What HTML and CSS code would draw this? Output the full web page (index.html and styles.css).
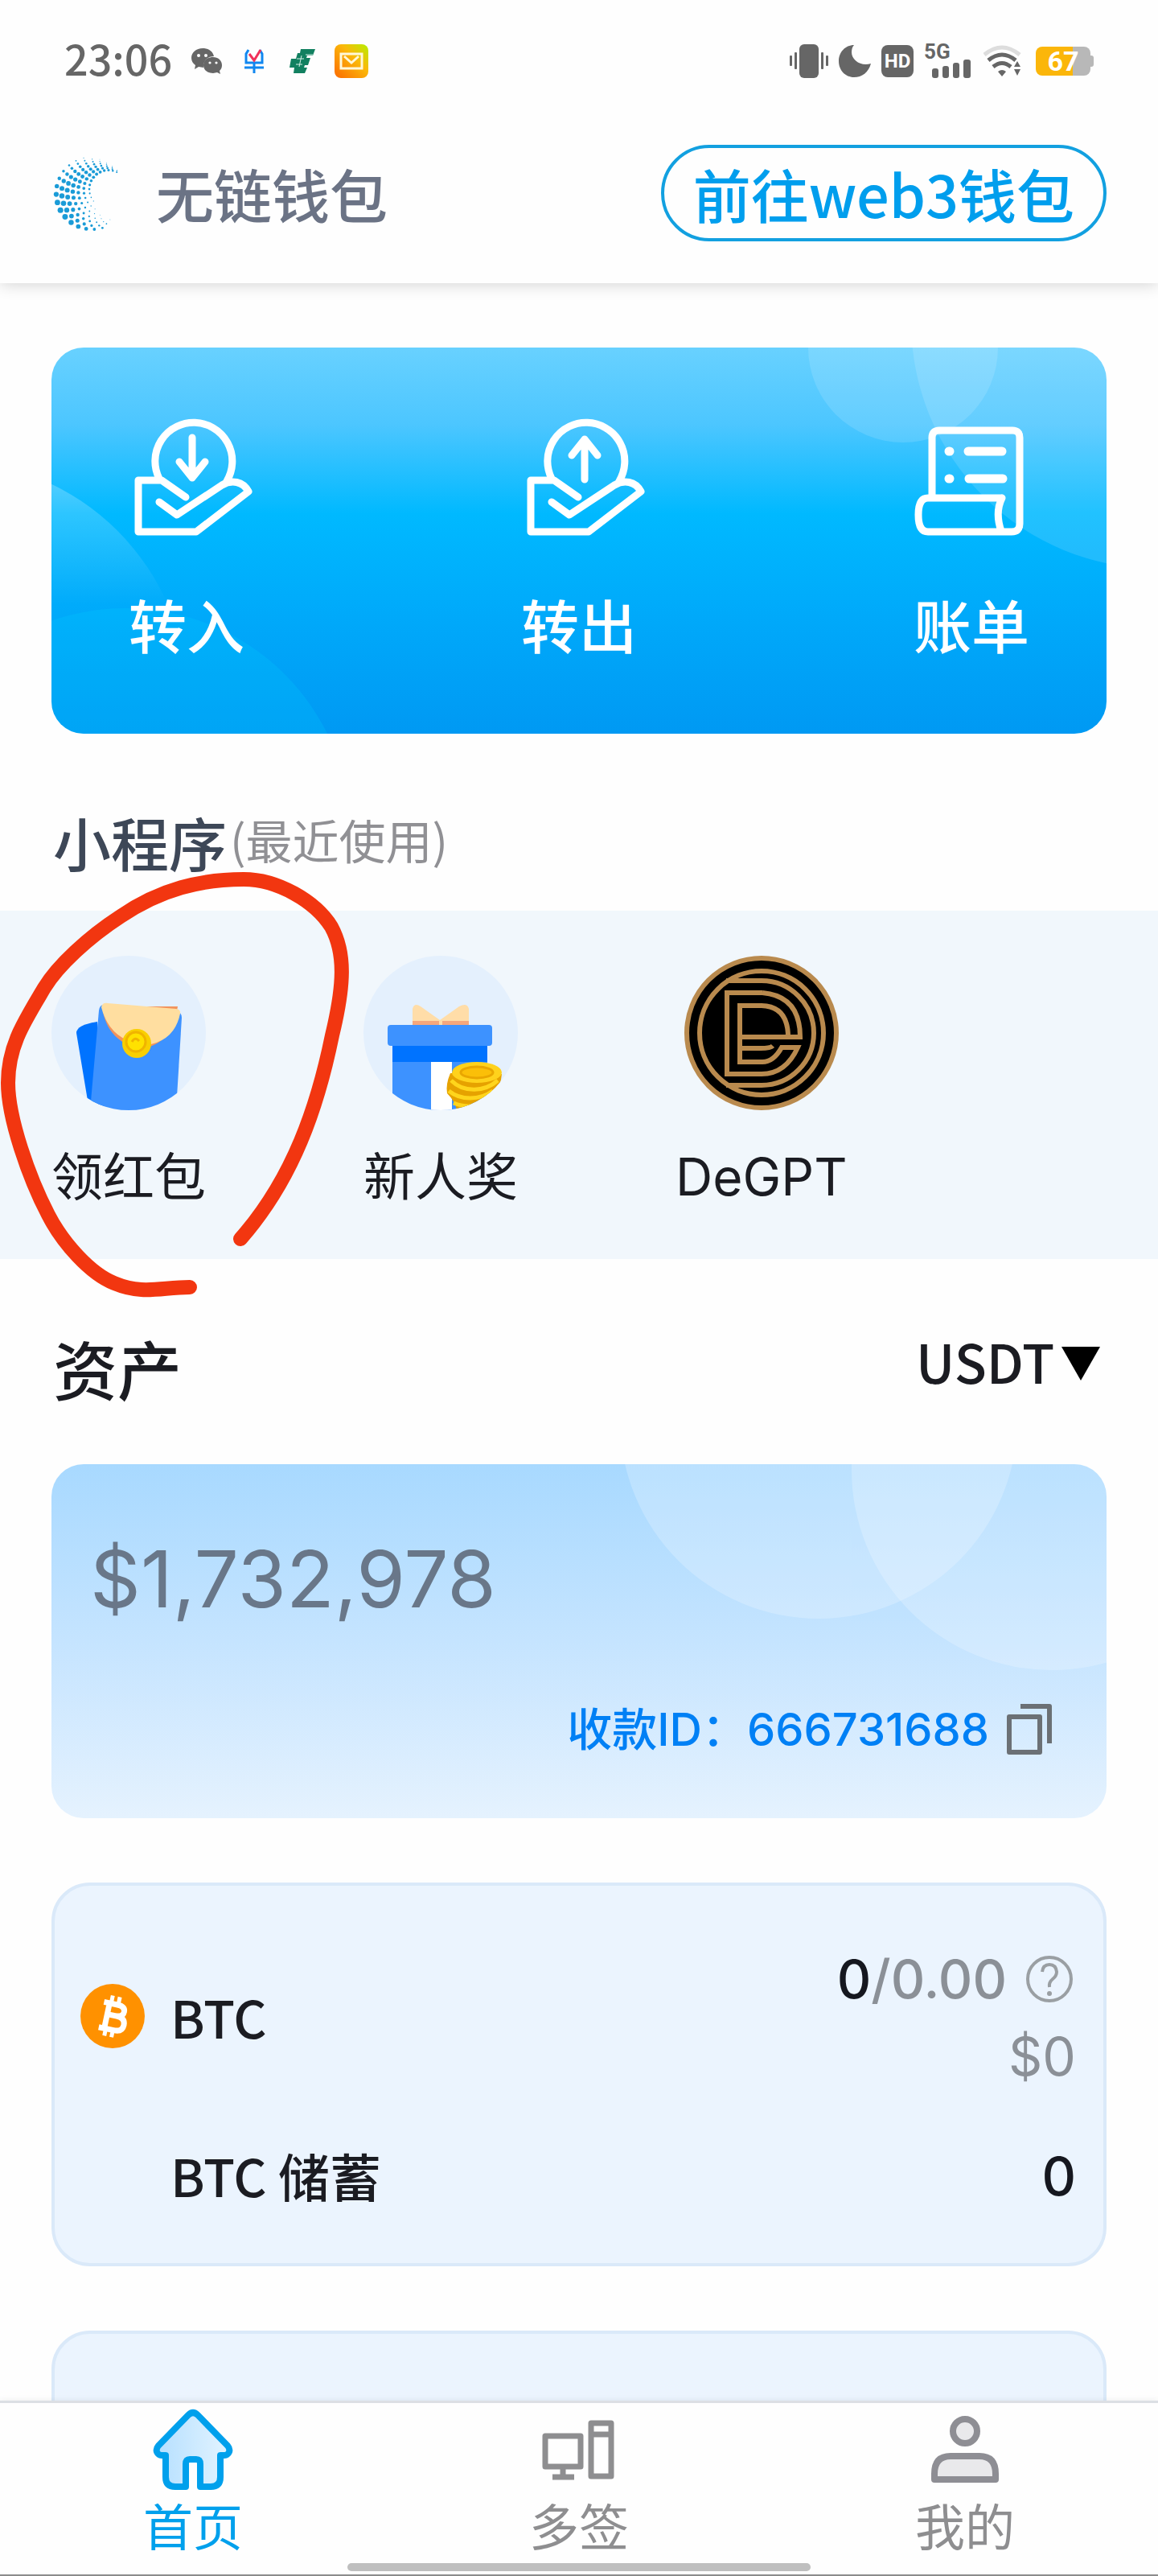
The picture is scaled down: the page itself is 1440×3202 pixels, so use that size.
FILE: index.html
```html
<!DOCTYPE html>
<html lang="zh-CN">
<head>
    <meta charset="UTF-8">
    <meta name="viewport" content="width=device-width, initial-scale=1">
    <title>无链钱包</title>
    <link rel="stylesheet" href="styles.css">
</head>
<body>
    <div class="app">
        <div class="top">
            <div class="status">
                <div class="status-left">
                    <span class="time">23:06</span>
                    <svg class="s-wechat" viewBox="0 0 38 32">
                        <path fill="#666" d="M14 0C6 0 0 5 0 12c0 4 2 7 5 9l-1 5 5-3 6 1c-1-8 5-14 13-14C27 4 21 0 14 0z"/>
                        <path fill="#666" d="M27 11c-7 0-12 4-12 10s5 10 12 10l5-1 4 2-1-4c2-2 3-4 3-7 0-6-5-10-11-10z"/>
                        <g fill="#fefefe"><circle cx="9" cy="9" r="2"/><circle cx="18" cy="9" r="2"/><circle cx="23" cy="18" r="1.6"/><circle cx="31" cy="18" r="1.6"/></g>
                    </svg>
                    <svg class="s-dan" viewBox="0 0 24 30" fill="none" stroke="#1187f0" stroke-width="3">
                        <path d="M5 1L2 6v11h20V6l-3-5M0 23h24M12 17v13"/>
                        <path stroke="#f0325a" d="M6 6l6 8 8-13"/>
                    </svg>
                    <svg class="s-green" viewBox="0 0 32 30">
                        <path fill="#128060" d="M14 0h18l-3 8h-7l-1 3h5l-3 9h-4l-1 3h4l-3 7H5l1-7H0l2-11h6l2-7h3z"/>
                        <path d="M9 12h9M8 19h8M20 7h9M15 8l-3 14" stroke="#d5efe5" fill="none"/>
                    </svg>
                    <svg class="s-mail" viewBox="0 0 42 42">
                        <defs>
                            <linearGradient id="mail" x1="1" y1="0" x2="0" y2="1">
                                <stop offset="0" stop-color="#b4f000"/>
                                <stop offset=".4" stop-color="#fbb90a"/>
                                <stop offset="1" stop-color="#fb6a00"/>
                            </linearGradient>
                        </defs>
                        <rect width="42" height="42" rx="8" fill="url(#mail)"/>
                        <path d="M8 12h26v18H8zM12 15l9 8 9-8" fill="none" stroke="#fff8d8" stroke-width="3"/>
                    </svg>
                </div>
                <div class="status-right">
                    <svg class="s-vib" viewBox="0 0 48 42" fill="#666">
                        <rect x="12" width="24" height="42" rx="6"/>
                        <rect y="14" width="3" height="13" rx="1"/><rect x="6" y="10" width="3" height="21" rx="1"/>
                        <rect x="39" y="10" width="3" height="21" rx="1"/><rect x="45" y="14" width="3" height="13" rx="1"/>
                    </svg>
                    <svg class="s-moon" viewBox="0 0 40 40"><path fill="#666" d="M19 0C8 0 0 9 0 20s8 20 19 20c10 0 18-6 21-17-12 4-24-4-24-14 0-4 1-7 3-9z"/></svg>
                    <span class="hd">HD</span>
                    <span class="signal">
                        <span class="net">5G</span>
                        <svg class="s-bars" viewBox="0 0 48 24" fill="#666"><rect y="11" width="8" height="12" rx="3"/><rect x="13" y="8" width="8" height="15" rx="3"/><rect x="26" y="4" width="8" height="19" rx="3"/><rect x="39" width="9" height="23" rx="3"/></svg>
                    </span>
                    <svg class="s-wifi" viewBox="0 0 47 40" fill="none" stroke="#666" stroke-width="5">
                        <path stroke="#ddd" d="M1 12Q23-6 45 12"/>
                        <path d="M6 19q17-14 34 0M12 27q11-9 22 0"/>
                        <path fill="#666" stroke="none" d="M18 33q5-4 10 0l-5 6zM38 27l4-7 4 7zM38 30h8l-4 8z"/>
                    </svg>
                    <span class="battery">67</span>
                </div>
            </div>
            <header class="header">
                <div class="brand">
                    <svg class="logo" id="logo" viewBox="0 0 100 100"></svg>
                    <h1>无链钱包</h1>
                </div>
                <button class="web3-btn">前往web3钱包</button>
            </header>
        </div>

        <main class="main">
            <section class="actions">
                <svg class="bubbles" viewBox="0 0 1312 480" preserveAspectRatio="none">
                    <defs>
                        <linearGradient id="fade" x1="0" y1="0" x2="0" y2="1">
                            <stop offset="0" stop-color="#fff" stop-opacity=".28"/>
                            <stop offset=".3" stop-color="#fff" stop-opacity="0"/>
                        </linearGradient>
                    </defs>
                    <circle cx="-130" cy="440" r="300" fill="url(#fade)"/>
                    <circle cx="92" cy="604" r="280" fill="#00d0ff" opacity=".2"/>
                    <circle cx="1059" cy="0" r="118" fill="#fff" opacity=".13"/>
                    <circle cx="1376" cy="-32" r="307" fill="#fff" opacity=".13"/>
                </svg>
                <button class="action">
                    <svg viewBox="-7 0 144 144">
                        <path d="M31 75a48 48 0 1 1 84 3"/>
                        <path d="M72 24v50M56 54l16 20 16-20"/>
                        <path d="M64 98L34 77H5v64h72l65-50c-7-13-21-15-33-8L53 120 31 104"/>
                    </svg>
                    <span>转入</span>
                </button>
                <button class="action">
                    <svg viewBox="-7 0 144 144">
                        <path d="M31 75a48 48 0 1 1 84 3"/>
                        <path d="M72 76V26M56 46l16-20 16 20"/>
                        <path d="M64 98L34 77H5v64h72l65-50c-7-13-21-15-33-8L53 120 31 104"/>
                    </svg>
                    <span>转出</span>
                </button>
                <button class="action">
                    <svg viewBox="0 0 144 144">
                        <path d="M23 98V24q0-9 9-9h91q9 0 9 9v107q0 10-10 10H18q-12 0-12-21t12-21h92M110 99q-9 18-1 41"/>
                        <path stroke-width="11" d="M68 41h42M69 75h42M44 41h1M44 75h1"/>
                    </svg>
                    <span>账单</span>
                </button>
            </section>

            <section class="mini">
                <h2 class="mini-title">小程序<small>(最近使用)</small></h2>
                <div class="mini-list">
                    <a class="mini-item" href="#">
                        <svg viewBox="0 0 192 192">
                            <defs><clipPath id="round"><circle cx="96" cy="96" r="96"/></clipPath></defs>
                            <g clip-path="url(#round)">
                                <rect width="192" height="192" fill="#e4f0fd"/>
                                <path fill="#0073ff" d="M31 96q0-10 26-14l10 110H47z"/>
                                <path fill="#3d92ff" d="M59 68q1-7 6-7l90 8q7 1 7 8l-7 115H48z"/>
                                <path fill="#f2935c" d="M63 63h94c-4 25-14 47-43 52-32-3-48-25-51-52z"/>
                                <path fill="#ffdea0" d="M62 64q1-6 8-5l85 7q6 1 5 6-7 34-42 39-45-4-56-47z"/>
                                <circle cx="106" cy="109" r="18" fill="#f9cf00"/>
                                <circle cx="105" cy="107" r="12" fill="#ffe100" stroke="#f0b400" stroke-width="3"/>
                                <path d="M100 107q4-7 9-1" fill="none" stroke="#f0b400" stroke-width="3"/>
                            </g>
                        </svg>
                        <span>领红包</span>
                    </a>
                    <a class="mini-item" href="#">
                        <svg viewBox="0 0 192 192">
                            <g clip-path="url(#round)">
                                <rect width="192" height="192" fill="#e4f0fd"/>
                                <path fill="#ffdda8" d="M61 86V66q2-8 10-3l24 17 24-17q10-5 12 3v20z"/>
                                <path fill="#f6a77c" d="M61 81h33v5H61zM98 81h33v5H98z"/>
                                <path fill="#3d92ff" d="M36 108h118v84H36z"/>
                                <path fill="#0073ff" d="M36 108h118v24H36z"/>
                                <rect x="30" y="86" width="130" height="26" rx="4" fill="#3d92ff"/>
                                <path fill="#fff" d="M84 132h26v60H84z"/>
                                <path fill="#e6a200" d="M108 146q-6 14-4 25 10 10 12 21h20q34-16 36-45z"/>
                                <path fill="none" stroke="#ffd51c" stroke-width="5" d="M109 155c16 16 42 14 58 0M106 168c15 12 38 12 55 0M112 183c12 5 26 5 38 0"/>
                                <ellipse cx="141" cy="145" rx="31" ry="13" fill="#ffd21c"/>
                                <ellipse cx="141" cy="145" rx="20" ry="7" fill="#fbbf08" stroke="#e9a600" stroke-width="3"/>
                            </g>
                        </svg>
                        <span>新人奖</span>
                    </a>
                    <a class="mini-item" href="#">
                        <svg viewBox="0 0 192 192" fill="none" stroke="#b98a4e" stroke-width="6">
                            <circle cx="96" cy="96" r="93" fill="#000"/>
                            <circle cx="96" cy="96" r="77"/>
                            <path d="M52 31h44a65 65 0 0 1 0 130H52"/>
                            <path d="M97 46H53v101h43q30 0 45-33h-20q-10 18-24 18H69V62h27q33 1 33 39M97 46q47 4 47 55H70M70 115h25q12 0 15-3"/>
                        </svg>
                        <span>DeGPT</span>
                    </a>
                </div>
                <!-- hand-drawn mark round the red packet -->
                <svg class="scribble" viewBox="0 1080 440 540">
                    <path d="M236 1600C200 1600 178 1610 142 1595C112 1583 78 1545 60 1510C36 1464 10 1390 10 1346C10 1300 30 1270 55 1228C72 1200 110 1165 150 1139C200 1105 250 1093 303 1093C345 1093 392 1120 412 1152C430 1185 428 1225 413 1287C395 1375 365 1465 299 1540"/>
                </svg>
            </section>

            <section class="assets">
                <div class="assets-head">
                    <h2>资产</h2>
                    <div class="currency">
                        <select aria-label="计价货币">
                            <option>USDT</option>
                        </select>
                        <svg viewBox="0 0 48 42"><path d="M0 0h48L24 42z"/></svg>
                    </div>
                </div>

                <div class="balance">
                    <svg class="bubbles" viewBox="0 0 1312 440" preserveAspectRatio="none" fill="#fff" opacity=".22">
                        <circle cx="954" cy="-55" r="247"/>
                    </svg>
                    <svg class="bubbles" viewBox="0 0 1312 440" preserveAspectRatio="none" fill="#fff" opacity=".22">
                        <circle cx="1244" cy="7" r="249"/>
                    </svg>
                    <div class="amount">$1,732,978</div>
                    <div class="pay-id">
                        <span>收款ID：666731688</span>
                        <button class="copy" aria-label="复制">
                            <svg viewBox="0 0 56 64"><path d="M3 16h38v44H3zM17 3h36v46"/></svg>
                        </button>
                    </div>
                </div>

                <div class="coin">
                    <div class="coin-row">
                        <svg class="coin-icon" viewBox="0 0 80 80">
                            <circle cx="40" cy="40" r="40" fill="#ff9100"/>
                            <g transform="rotate(12 40 40)" fill="none" stroke="#fff" stroke-width="7">
                                <path d="M26 25h17q10 0 10 7t-10 7H33M33 39h12q11 0 11 9t-11 9H26M33 25v32"/>
                                <path stroke-width="5" d="M35 15v9M44 15v9M35 57v9M44 57v9"/>
                            </g>
                        </svg>
                        <span class="coin-name">BTC</span>
                        <div class="coin-value">
                            <div class="line">
                                <span class="num"><b>0</b>/0.00</span>
                                <button class="help" aria-label="说明">
                                    <svg viewBox="0 0 58 58"><circle cx="29" cy="29" r="27"/><path d="M20 20q1-9 9-9t9 9q0 5-5 9t-4 10"/><circle class="dot" cx="29" cy="47" r="3"/></svg>
                                </button>
                            </div>
                            <div class="line">$0</div>
                        </div>
                    </div>
                    <div class="coin-row saving">
                        <span class="coin-name">BTC 储蓄</span>
                        <div class="coin-value"><b>0</b></div>
                    </div>
                </div>

                <div class="coin">
                    <div class="line">
                        <button class="help" aria-label="说明">
                            <svg viewBox="0 0 58 58"><circle cx="29" cy="29" r="27"/></svg>
                        </button>
                    </div>
                </div>
            </section>
        </main>

        <nav class="tabs">
            <a class="tab active" href="#">
                <svg viewBox="0 0 104 104">
                    <defs>
                        <linearGradient id="home" x1="0" y1="0" x2="1" y2="0">
                            <stop offset="0" stop-color="#b5dfff"/>
                            <stop offset="1" stop-color="#e3f4ff"/>
                        </linearGradient>
                    </defs>
                    <path fill="url(#home)" stroke="#00a0ec" stroke-width="8" stroke-linejoin="round" d="M46 9q6-6 12 0l37 38c5 6 1 12-4 12h-5v27q0 12-12 12H61V70q0-6-5-6h-8q-5 0-5 6v28H30q-12 0-12-12V59h-5c-5 0-9-6-4-12z"/>
                </svg>
                <span>首页</span>
            </a>
            <a class="tab" href="#">
                <svg viewBox="0 0 104 104" fill="none" stroke="#8e8e90" stroke-width="7" stroke-linejoin="round">
                    <path d="M10 35h44v38H10zM32 73v15M19 86h27M67 19h25v66H67zM67 33h25"/>
                </svg>
                <span>多签</span>
            </a>
            <a class="tab" href="#">
                <svg viewBox="0 0 104 104" fill="#e9e9eb" stroke="#8e8e94" stroke-width="8" stroke-linejoin="round">
                    <circle cx="52" cy="29" r="15"/>
                    <path d="M14 89V82q0-22 20-22h36q20 0 20 22v7z"/>
                </svg>
                <span>我的</span>
            </a>
            <div class="home-bar"></div>
        </nav>
    </div>

    <script>
        // rings of dots, growing towards the lower left
        const logo = document.getElementById('logo');
        for (let k = 0; k < 7; k++) {
            const t = k / 6;
            const cx = 72 - 20 * t, cy = 45 + 5 * t, r = 24 + 22 * t;
            for (let j = 0; j < 20; j++) {
                const deg = 50 + j * 13 + k * 4;
                const a = deg * Math.PI / 180;
                const peak = 230 - 80 * t;
                const size = (2 + 1.6 * t) * Math.exp(-Math.pow((deg - peak) / 80, 2));
                if (size < 0.4) continue;
                const dot = document.createElementNS('http://www.w3.org/2000/svg', 'circle');
                dot.setAttribute('cx', cx + r * Math.cos(a));
                dot.setAttribute('cy', cy + r * Math.sin(a));
                dot.setAttribute('r', size);
                logo.appendChild(dot);
            }
        }
    </script>
</body>
</html>
```
FILE: styles.css
```css
* {
    box-sizing: border-box;
}

body {
    margin: 0;
    background: #fefefe;
    color: #1b1c22;
    font-family: 'Noto Sans CJK SC', sans-serif;
}

h1, h2 {
    margin: 0;
    font-weight: 500;
}

button {
    padding: 0;
    border: none;
    background: none;
    font-family: inherit;
    cursor: pointer;
}

a {
    color: inherit;
    text-decoration: none;
}

svg {
    display: block;
    flex: none;
}

.app {
    height: 100vh;
    display: flex;
    flex-direction: column;
    overflow: hidden;
}

/* status bar and header */
.top {
    flex: none;
    box-shadow: 0 0 20px rgba(0, 0, 0, 0.2);
}

.status {
    height: 152px;
    padding: 0 80px;
    display: flex;
    align-items: center;
    justify-content: space-between;
    color: #666;
}

.status-left, .status-right {
    display: flex;
    align-items: center;
}

.status-right {
    gap: 13px;
}

.time {
    font-size: 52px;
    font-weight: 500;
    line-height: 64px;
    margin: -8px 24px 0 0;
}

.s-wechat { width: 38px; margin-right: 28px; }
.s-dan { width: 24px; margin-right: 32px; }
.s-green { width: 32px; margin-right: 24px; }
.s-mail { width: 42px; }
.s-vib { width: 48px; }
.s-moon { width: 40px; }
.s-wifi { width: 47px; margin: 0 3px; }
.s-bars { width: 48px; margin-left: 10px; }

.hd {
    width: 40px;
    height: 40px;
    border-radius: 8px;
    background: #666;
    color: #fefefe;
    font: 700 24px/40px Roboto, sans-serif;
    text-align: center;
}

.net {
    display: block;
    font: 700 26px/20px Roboto, sans-serif;
}

.battery {
    position: relative;
    width: 68px;
    height: 36px;
    margin: 0 4px 0 2px;
    border-radius: 8px;
    background: linear-gradient(90deg, #fbb60a 68%, #b8b8b8 68%);
    color: #fff;
    font: 700 34px/37px Roboto, sans-serif;
    text-align: center;
}

.battery::after {
    content: '';
    position: absolute;
    left: 68px;
    top: 11px;
    width: 4px;
    height: 14px;
    border-radius: 0 3px 3px 0;
    background: #b8b8b8;
}

.header {
    display: flex;
    align-items: center;
    justify-content: space-between;
    padding: 28px 64px 52px;
}

.brand {
    display: flex;
    align-items: center;
    gap: 32px;
}

.logo {
    width: 98px;
    fill: #1a9bd7;
}

.brand h1 {
    color: #6b7385;
    font-size: 72px;
    line-height: 80px;
}

.web3-btn {
    height: 120px;
    padding: 0 36px;
    border: 4px solid #12a0e0;
    border-radius: 60px;
    color: #009eed;
    font-size: 72px;
    font-weight: 500;
    line-height: 80px;
}

/* content */
.main {
    flex: 1;
    min-height: 0;
    overflow: hidden;
    padding-top: 80px;
}

.top, .tabs {
    position: relative;
    z-index: 1;
    background: #fefefe;
}

.bubbles {
    position: absolute;
    left: 0;
    top: 0;
    width: 100%;
    height: 100%;
}

.actions {
    position: relative;
    overflow: hidden;
    display: flex;
    justify-content: space-between;
    margin: 0 64px;
    padding: 88px 96px 97px;
    border-radius: 40px;
    background: linear-gradient(#68d1ff, #4cc6ff 20%, #00b9ff 43%, #00a9fa 70%, #0099f3);
}

.action {
    position: relative;
    display: flex;
    flex-direction: column;
    align-items: center;
    gap: 71px;
    color: #fff;
    font-size: 72px;
    font-weight: 500;
    line-height: 80px;
}

.action svg {
    width: 144px;
    overflow: visible;
    fill: none;
    stroke: #fff;
    stroke-width: 9;
    stroke-linecap: round;
    stroke-linejoin: round;
}

.mini {
    position: relative;
    margin-top: 94px;
}

.mini-title {
    display: flex;
    align-items: center;
    padding: 0 66px 46px;
    color: #3d4757;
    font-size: 72px;
    line-height: 80px;
}

.mini-title small {
    margin-left: 4px;
    color: #909094;
    font-size: 58px;
    font-weight: 400;
    line-height: 72px;
    padding-bottom: 6px;
}

.mini-list {
    display: flex;
    gap: 196px;
    padding: 56px 64px 66px;
    background: #f1f7fc;
}

.mini-item {
    display: flex;
    flex-direction: column;
    align-items: center;
    gap: 47px;
    font-family: Inter, 'Noto Sans CJK SC', sans-serif;
    font-size: 64px;
    line-height: 72px;
}

.mini-item svg {
    width: 192px;
}

.scribble {
    position: absolute;
    left: 0;
    top: 74px;
    width: 440px;
    fill: none;
    stroke: #f23610;
    stroke-width: 18;
    stroke-linecap: round;
    pointer-events: none;
}

.assets {
    padding: 86px 64px 0;
}

.assets-head {
    display: flex;
    align-items: center;
    justify-content: space-between;
    margin-bottom: 73px;
}

.assets-head h2 {
    padding-left: 2px;
    font-size: 80px;
    line-height: 96px;
}

.currency {
    display: flex;
    align-items: center;
    gap: 8px;
    padding: 0 8px 8px 0;
}

.currency select {
    appearance: none;
    padding: 0 0 8px;
    border: none;
    background: none;
    color: inherit;
    font-family: inherit;
    font-size: 66px;
    font-weight: 500;
    line-height: 80px;
}

.currency svg {
    width: 48px;
    fill: #000;
}

.balance {
    position: relative;
    overflow: hidden;
    padding: 87px 68px 78px 48px;
    border-radius: 40px;
    background: linear-gradient(#a8d9ff, #c5e4ff 50%, #e5f2fe);
    font-family: Inter, 'Noto Sans CJK SC', sans-serif;
}

.amount {
    position: relative;
    margin-bottom: 99px;
    color: #697789;
    font-size: 98px;
    line-height: 112px;
}

.pay-id {
    position: relative;
    display: flex;
    align-items: center;
    justify-content: flex-end;
    gap: 22px;
    color: #0080f5;
    font-size: 56px;
    font-weight: 500;
    line-height: 64px;
}

.copy svg {
    width: 56px;
    fill: none;
    stroke: #6b7075;
    stroke-width: 6;
    stroke-linejoin: round;
}

.coin {
    margin-top: 80px;
    padding: 64px 34px 60px 32px;
    border: 4px solid #dae9f9;
    border-radius: 48px;
    background: #ebf4fe;
    font-size: 64px;
    line-height: 96px;
}

.coin-row {
    display: flex;
    align-items: center;
    gap: 32px;
}

.coin-name {
    font-weight: 500;
}

.saving {
    margin-top: 49px;
    padding-left: 112px;
}

.coin-icon {
    width: 80px;
}

.coin-value {
    margin-left: auto;
    padding-top: 4px;
    font-family: Inter, sans-serif;
    font-size: 66px;
    color: #8b9097;
}

.coin-value b {
    color: #15171f;
    font-weight: 500;
}

.line {
    display: flex;
    align-items: center;
    justify-content: flex-end;
    gap: 24px;
    min-height: 96px;
}

.num {
    font-weight: 500;
}

.help {
    margin-right: 4px;
}

.help svg {
    width: 58px;
    fill: none;
    stroke: #9a9fa3;
    stroke-width: 4;
}

.help .dot {
    fill: #9a9fa3;
    stroke: none;
}

/* bottom tabs */
.tabs {
    flex: none;
    display: flex;
    padding: 6px 0 26px;
    border-top: 3px solid #dcdfe4;
    border-bottom: 2px solid #8c8c8c;
    box-shadow: 0 0 8px rgba(0, 0, 0, 0.08);
}

.tab {
    flex: 1;
    display: flex;
    flex-direction: column;
    align-items: center;
    gap: 5px;
    color: #8e8e90;
    font-size: 62px;
    line-height: 72px;
}

.tab svg {
    width: 104px;
}

.tab.active {
    color: #00a0ec;
}

.home-bar {
    position: absolute;
    left: 30%;
    right: 30%;
    bottom: 4px;
    height: 10px;
    border-radius: 5px;
    background: #bfbfbf;
}
```
